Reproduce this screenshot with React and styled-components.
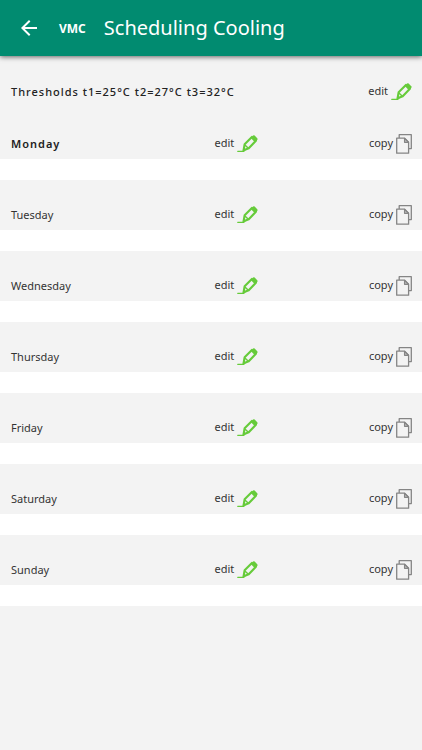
import React from 'react';
import styled, { createGlobalStyle } from 'styled-components';

const theme = {
  green: '#018b70',
  lime: '#66cb3a',
  background: '#f3f3f3',
  text: '#333',
  dark: '#222',
  outline: '#858585',
};

const GlobalStyle = createGlobalStyle`
  *,
  *::before,
  *::after {
    box-sizing: border-box;
  }

  body {
    background: ${theme.background};
    color: ${theme.text};
    font-family: 'Noto Sans', 'Open Sans', sans-serif;
    font-size: 11px;
    margin: 0;
  }
`;

const Toolbar = styled.header`
  align-items: center;
  background: ${theme.green};
  box-shadow: 0 1px 5px rgba(0, 0, 0, 0.6);
  color: #fff;
  display: flex;
  height: 56px;
  padding: 0 17px;
`;

const BackButton = styled.button`
  background: none;
  border: 0;
  color: inherit;
  cursor: pointer;
  display: flex;
  margin-right: 18px;
  padding: 0;
`;

const Brand = styled.span`
  font-size: 12px;
  font-weight: 700;
  margin-right: 18px;
`;

const Title = styled.h1`
  font-size: 20px;
  font-weight: 400;
  line-height: 28px;
  margin: 0;
`;

const Row = styled.div`
  align-items: center;
  display: flex;
  gap: 6px;
  height: 30px;
  padding: 0 10px 0 11px;
`;

const Thresholds = styled.section`
  padding-top: 21px;
`;

const ThresholdsText = styled.p`
  color: ${theme.dark};
  flex: 1;
  font-weight: 500;
  letter-spacing: 1px;
  line-height: 16px;
  margin: 0;
`;

const DayList = styled.ul`
  list-style: none;
  margin: 0;
  padding: 0;
`;

const Day = styled.li`
  border-bottom: 21px solid #fff;
  padding-top: 20px;

  &:first-child {
    padding-top: 22px;
  }
`;

const DayName = styled.h2`
  color: ${props => (props.$current ? theme.dark : theme.text)};
  flex: 1;
  font-size: 11px;
  font-weight: ${props => (props.$current ? 600 : 400)};
  letter-spacing: ${props => (props.$current ? '1px' : 'normal')};
  line-height: 16px;
  margin: 0;
`;

const DayActions = styled.div`
  display: flex;
  flex: 1;
  justify-content: space-between;
`;

const Action = styled.button`
  align-items: center;
  background: none;
  border: 0;
  color: ${theme.text};
  cursor: pointer;
  display: flex;
  font: inherit;
  gap: 3px;
  line-height: 20px;
  padding: 0;
`;

const Label = styled.span`
  padding-bottom: 2px;
`;

const BackIcon = () => (
  <svg width="24" height="24" viewBox="0 0 24 24" fill="currentColor" aria-hidden="true">
    <path d="M20 11H7.83l5.59-5.59L12 4l-8 8 8 8 1.41-1.41L7.83 13H20v-2z" />
  </svg>
);

const PencilIcon = () => (
  <svg width="21" height="20" viewBox="0 0 22 20" fill="none" stroke={theme.lime} aria-hidden="true">
    <path d="M.8 17.7h6.5" strokeWidth="1.4" strokeLinecap="round" />
    <path d="M8 10.2 15.6 2.6 19.8 6.6 12.3 14.5 6.9 16.5Z" strokeWidth="2.2" strokeLinejoin="round" />
    <path d="M14.4 3.6 16.8 1.1Q17.7.5 18.5 1.2L21.2 3.9Q21.9 4.9 21.2 5.8L18.8 8.2Z" fill={theme.lime} stroke="none" />
    <path d="M8 10.8 11.9 14.4" strokeWidth="1.5" />
    <path d="M6.9 14 5.6 18.2 9.8 16.4Z" fill={theme.lime} stroke="none" />
  </svg>
);

const CopyIcon = () => (
  <svg
    width="16"
    height="20"
    viewBox="0 0 16 20"
    fill="none"
    stroke={theme.outline}
    strokeWidth="1.3"
    strokeLinejoin="round"
    aria-hidden="true"
  >
    <path d="M3.2 4V.7H15.3V14.6H12.9" />
    <path d="M.7 4.2H8.6L12.6 8.3V19.2H.7Z" />
    <path d="M8.6 4.4V8.3H12.4Z" fill="#ccc" />
  </svg>
);

const EditAction = ({ subject }) => (
  <Action type="button" aria-label={`edit ${subject}`}>
    <Label>edit</Label>
    <PencilIcon />
  </Action>
);

const CopyAction = ({ subject }) => (
  <Action type="button" aria-label={`copy ${subject}`}>
    <Label>copy</Label>
    <CopyIcon />
  </Action>
);

const days = ['Monday', 'Tuesday', 'Wednesday', 'Thursday', 'Friday', 'Saturday', 'Sunday'];

export default () => (
  <>
    <GlobalStyle />
    <Toolbar>
      <BackButton type="button" aria-label="Back">
        <BackIcon />
      </BackButton>
      <Brand>VMC</Brand>
      <Title>Scheduling Cooling</Title>
    </Toolbar>
    <main>
      <Thresholds>
        <Row>
          <ThresholdsText>Thresholds t1=25°C t2=27°C t3=32°C</ThresholdsText>
          <EditAction subject="thresholds" />
        </Row>
      </Thresholds>
      <DayList>
        {days.map((day, index) => (
          <Day key={day}>
            <Row>
              <DayName $current={index === 0}>{day}</DayName>
              <DayActions>
                <EditAction subject={day} />
                <CopyAction subject={day} />
              </DayActions>
            </Row>
          </Day>
        ))}
      </DayList>
    </main>
  </>
);
